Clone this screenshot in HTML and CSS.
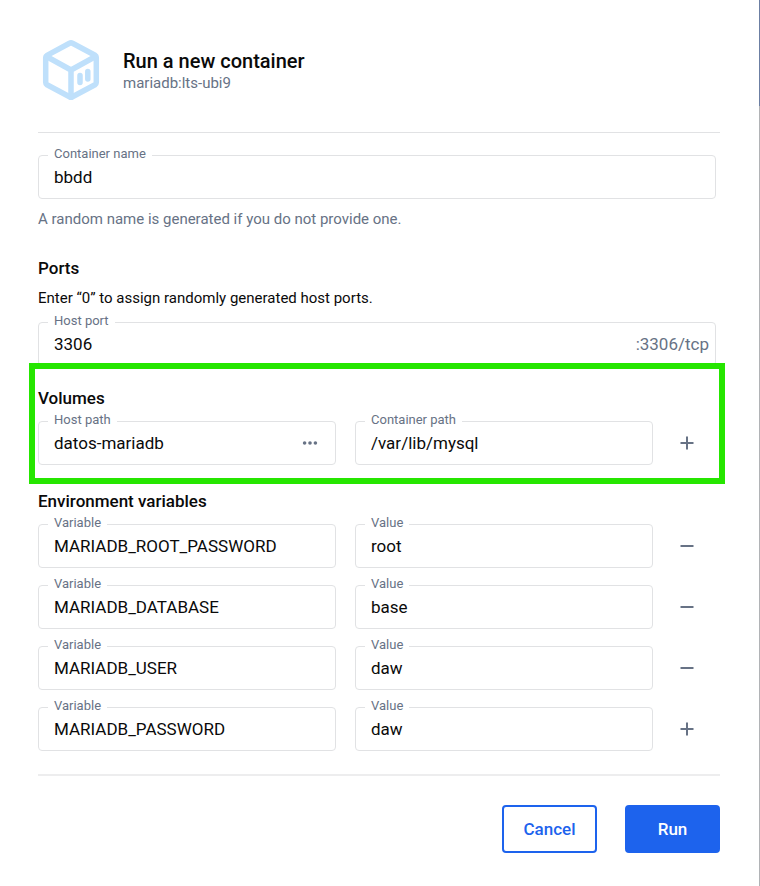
FILE: index.html
```html
<!DOCTYPE html>
<html lang="en">
<head>
<meta charset="utf-8">
<meta name="viewport" content="width=device-width, initial-scale=1">
<title>Run a new container</title>
<link rel="stylesheet" href="styles.css">
</head>
<body>
<main class="dialog">
  <header class="header">
    <svg class="logo" viewBox="0 0 66 64" aria-hidden="true">
      <g fill="none" stroke="#bfe0fb" stroke-width="5.500" stroke-linejoin="round" stroke-linecap="round">
        <path d="M31.500 5.300Q33 4.300 34.500 5.300L57 17.300Q58.300 18 58.300 19.500V44.500Q58.300 46 57 46.800L34.500 58.800Q33 59.700 31.500 58.800L9 46.800Q7.700 46 7.700 44.500V19.500Q7.700 18 9 17.300Z"/>
        <path d="M8.500 18.500 33 32 57.500 18.500M33 32V59"/>
        <path d="M42 37.500V44.500M49.800 33.500V41"/>
      </g>
    </svg>
    <div class="header-text">
      <h1 class="title">Run a new container</h1>
      <p class="image-name">mariadb:lts-ubi9</p>
    </div>
  </header>

  <form class="form">
    <section class="section section-name">
      <div class="field field-full">
        <label class="label" for="name">Container name</label>
        <input class="input" id="name" type="text" value="bbdd">
      </div>
      <p class="hint">A random name is generated if you do not provide one.</p>
    </section>

    <section class="section section-ports">
      <h2 class="heading">Ports</h2>
      <p class="note">Enter “0” to assign randomly generated host ports.</p>
      <div class="field field-full">
        <label class="label" for="port">Host port</label>
        <input class="input" id="port" type="text" value="3306">
        <span class="suffix">:3306/tcp</span>
      </div>
    </section>

    <section class="section section-volumes">
      <h2 class="heading">Volumes</h2>
      <div class="row">
        <div class="field">
          <label class="label" for="host-path">Host path</label>
          <input class="input" id="host-path" type="text" value="datos-mariadb">
          <button class="icon-button browse" type="button" aria-label="Browse">
            <svg class="icon" viewBox="0 0 20 20"><g fill="#677285"><circle cx="4" cy="10" r="2"/><circle cx="10" cy="10" r="2"/><circle cx="16" cy="10" r="2"/></g></svg>
          </button>
        </div>
        <div class="field">
          <label class="label" for="container-path">Container path</label>
          <input class="input" id="container-path" type="text" value="/var/lib/mysql">
        </div>
        <button class="icon-button" type="button" aria-label="Add volume">
          <svg class="icon" viewBox="0 0 20 20"><path class="stroke" d="M3.500 10H16.500M10 3.500V16.500"/></svg>
        </button>
      </div>
    </section>

    <section class="section section-env">
      <h2 class="heading">Environment variables</h2>
      <div class="rows">
        <div class="row">
          <div class="field">
            <label class="label" for="var1">Variable</label>
            <input class="input" id="var1" type="text" value="MARIADB_ROOT_PASSWORD">
          </div>
          <div class="field">
            <label class="label" for="val1">Value</label>
            <input class="input" id="val1" type="text" value="root">
          </div>
          <button class="icon-button" type="button" aria-label="Remove variable">
            <svg class="icon" viewBox="0 0 20 20"><path class="stroke" d="M3.500 10H16.500"/></svg>
          </button>
        </div>
        <div class="row">
          <div class="field">
            <label class="label" for="var2">Variable</label>
            <input class="input" id="var2" type="text" value="MARIADB_DATABASE">
          </div>
          <div class="field">
            <label class="label" for="val2">Value</label>
            <input class="input" id="val2" type="text" value="base">
          </div>
          <button class="icon-button" type="button" aria-label="Remove variable">
            <svg class="icon" viewBox="0 0 20 20"><path class="stroke" d="M3.500 10H16.500"/></svg>
          </button>
        </div>
        <div class="row">
          <div class="field">
            <label class="label" for="var3">Variable</label>
            <input class="input" id="var3" type="text" value="MARIADB_USER">
          </div>
          <div class="field">
            <label class="label" for="val3">Value</label>
            <input class="input" id="val3" type="text" value="daw">
          </div>
          <button class="icon-button" type="button" aria-label="Remove variable">
            <svg class="icon" viewBox="0 0 20 20"><path class="stroke" d="M3.500 10H16.500"/></svg>
          </button>
        </div>
        <div class="row">
          <div class="field">
            <label class="label" for="var4">Variable</label>
            <input class="input" id="var4" type="text" value="MARIADB_PASSWORD">
          </div>
          <div class="field">
            <label class="label" for="val4">Value</label>
            <input class="input" id="val4" type="text" value="daw">
          </div>
          <button class="icon-button" type="button" aria-label="Add variable">
            <svg class="icon" viewBox="0 0 20 20"><path class="stroke" d="M3.500 10H16.500M10 3.500V16.500"/></svg>
          </button>
        </div>
      </div>
    </section>

    <footer class="actions">
      <button class="button button-outline" type="button">Cancel</button>
      <button class="button button-primary" type="submit">Run</button>
    </footer>
  </form>
</main>
</body>
</html>
```
FILE: styles.css
```css
*,
*::before,
*::after {
  box-sizing: border-box;
}

body {
  margin: 0;
  background: #fff;
  color: #0a0a0a;
  font-family: Roboto, "Liberation Sans", sans-serif;
}

h1,
h2,
p {
  margin: 0;
}

.dialog {
  position: relative;
  min-height: 100vh;
  padding: 38px 40px 32px 38px;
}

/* Window edge: the scroll thumb over its track */
.dialog::after {
  content: "";
  position: absolute;
  top: 0;
  right: 0;
  bottom: 0;
  width: 1px;
  background: linear-gradient(#6c7fa3 106px, #b1b3b6 106px);
}

.header {
  display: flex;
  align-items: center;
  gap: 19px;
  padding-bottom: 30px;
  border-bottom: 1px solid #e1e2e4;
}

.logo {
  width: 66px;
  height: 64px;
}

.header-text {
  padding-top: 2px;
}

.title {
  font-size: 20px;
  font-weight: 500;
  line-height: 24px;
}

.image-name {
  color: #677285;
  font-size: 15px;
  line-height: 20px;
}

.section-name {
  padding-top: 22px;
}

.field {
  position: relative;
  display: flex;
  align-items: center;
  min-width: 0;
  height: 44px;
  border: 1px solid #e1e2e4;
  border-radius: 4px;
}

.field-full {
  margin-right: 4px;
}

.label {
  position: absolute;
  top: -10px;
  left: 9px;
  padding: 0 6px;
  background: #fff;
  color: #677285;
  font-size: 13px;
  line-height: 16px;
}

.input {
  flex: 1;
  min-width: 0;
  height: 100%;
  padding: 0 0 0 15px;
  border: 0;
  outline: 0;
  background: none;
  color: inherit;
  font: 400 17px/24px Roboto, "Liberation Sans", sans-serif;
}

.suffix {
  padding-right: 6px;
  color: #677285;
  font-size: 17px;
  line-height: 24px;
}

.hint,
.note {
  font-size: 15px;
  line-height: 20px;
}

.hint {
  margin-top: 10px;
  color: #677285;
}

.note {
  margin: 8px 0 14px;
}

.heading {
  font-size: 17px;
  font-weight: 500;
  line-height: 24px;
}

.section-ports {
  padding-top: 27px;
}

/* Highlight frame drawn over the lower edge of the ports field */
.section-volumes {
  position: relative;
  margin: -3px -5px 0 -9px;
  padding: 17px 0 13px 3px;
  border: 6px solid #26e600;
  background: #fff;
}

.section-volumes .row {
  margin: 11px -1px 0 0;
}

.row {
  display: grid;
  grid-template-columns: 1fr 1fr 48px;
  align-items: center;
  gap: 19px;
}

.section-env {
  padding-top: 5px;
}

.rows {
  display: grid;
  gap: 17px;
  margin-top: 11px;
}

.icon-button {
  display: grid;
  place-items: center;
  width: 30px;
  height: 28px;
  padding: 0;
  border: 0;
  background: none;
}

.icon {
  width: 20px;
  height: 20px;
}

.stroke {
  fill: none;
  stroke: #677285;
  stroke-width: 2;
}

.browse {
  margin-right: 10px;
}

.browse .icon {
  width: 18px;
  height: 18px;
}

.actions {
  display: flex;
  justify-content: flex-end;
  gap: 28px;
  margin-top: 23px;
  padding-top: 29px;
  border-top: 2px solid #ededee;
}

.button {
  width: 95px;
  height: 48px;
  padding: 0;
  border: 2px solid #1d63ed;
  border-radius: 4px;
  font: 500 17px/24px Roboto, "Liberation Sans", sans-serif;
}

.button-outline {
  background: #fff;
  color: #1d63ed;
}

.button-primary {
  background: #1d63ed;
  color: #fff;
}
```
